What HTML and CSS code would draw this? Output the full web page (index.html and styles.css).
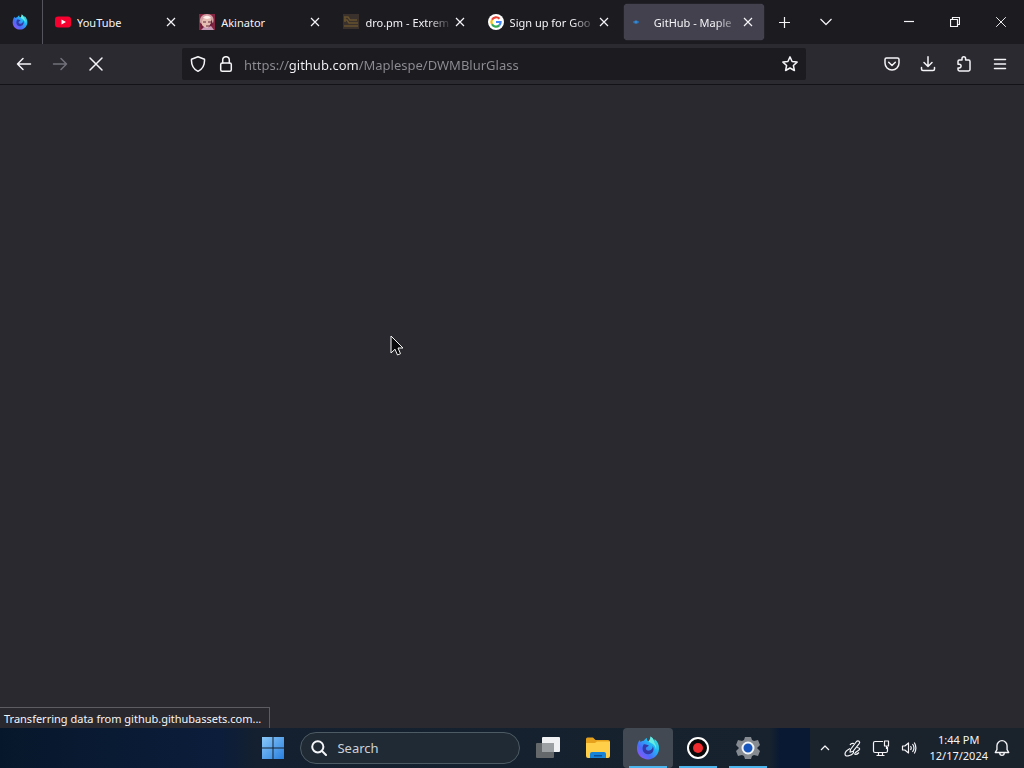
FILE: index.html
```html
<!DOCTYPE html>
<html lang="en">
<head>
<meta charset="utf-8">
<meta name="viewport" content="width=device-width, initial-scale=1">
<title>GitHub - Maplespe/DWMBlurGlass</title>
<link rel="stylesheet" href="styles.css">
</head>
<body>
<svg class="defs" aria-hidden="true">
  <defs>
    <linearGradient id="fox-body" x1="1" y1="0" x2="0" y2="1">
      <stop offset="0" stop-color="#54f0d0"/><stop offset=".35" stop-color="#20b8f5"/><stop offset=".65" stop-color="#4a6cf8"/><stop offset="1" stop-color="#a94df5"/>
    </linearGradient>
    <linearGradient id="win-blue" x1="0" y1="0" x2="1" y2="1">
      <stop offset="0" stop-color="#8ac8f8"/><stop offset="1" stop-color="#287fe0"/>
    </linearGradient>
    <symbol id="firefox" viewBox="0 0 24 24">
      <path fill="url(#fox-body)" d="M2 7c.4-1.200 1-2.300 2-3l.5 2c1-.8 2-1.200 3.300-1.200C8.700 3.300 10 2.300 11 2c-.5 1.400 0 2.500 1.500 3.300C13.800 4 14.500 2.500 14.400.6c2 1 3 2.500 3.700 4.200.5-.4.600-1.100.5-1.800C21.500 5.300 23.300 9 23 13c-.5 6-5.200 10.400-11 10.400S1.200 18.900 1 13c-.1-2.200.3-4.300 1-6z"/>
      <path fill="#3538a8" d="M7.500 8.500c2.500-.8 3.300 1 5.300.8-.6 1.500-2.500 1.600-2.900 2.700-.5 1.700 1.500 3 3.400 2.600 2.200-.5 3.600-2.300 3.400-4.700 2 3.200.5 8-4.200 8.300-4.500.3-7.500-4-5-9.700z"/>
      <path fill="#76f5de" d="M14.400.6c4 2.300 3.200 5.400 5 7.800 1 1.700 1 3.600.6 5.200-.4-2.700-1.500-4.600-3.600-5.800-2-.9-3-1.600-3.900-2.500C14 4 14.500 2.500 14.400.6z" opacity=".8"/>
    </symbol>
    <symbol id="cross" viewBox="0 0 10 10"><path d="M1 1l8 8M9 1L1 9"/></symbol>
  </defs>
</svg>

<div class="browser">
  <header class="tabstrip">
    <button class="pinned" aria-label="Firefox View"><svg width="16" height="16"><use href="#firefox"/></svg></button>
    <div class="tabs" role="tablist">
      <div class="tab" role="tab">
        <svg class="favicon" viewBox="0 0 16 16"><rect y="2.500" width="16" height="11" rx="3" fill="#f5002f"/><path d="M6.500 5.500v5L11 8z" fill="#fff"/></svg>
        <span class="tab-title">YouTube</span>
        <button class="tab-close" aria-label="Close YouTube"><svg class="line" width="10" height="10"><use href="#cross"/></svg></button>
      </div>
      <div class="tab" role="tab">
        <svg class="favicon" viewBox="0 0 16 16"><rect width="16" height="16" fill="#842541"/><path d="M1 9C0 3 4 0 8 0s8 3 6 9l-2 1H3z" fill="#d3a1a5"/><path d="M3 7c1-4 8-5 10-1l-1 5-3 3H6l-3-3z" fill="#e6bdb2"/><path d="M4 4c2-3 6-3 8 0L8 5z" fill="#fff0ec"/><path d="M4 8h3M9 8h3M7 12h3" stroke="#63243a"/><path d="M12 5l2 5-3 4-1-2 2-3zM1 8l2 4 3 2-4 1z" fill="#6d1e3e"/><path d="M2 16l3-3 3 1 4-2 3 4z" fill="#c79cb8"/></svg>
        <span class="tab-title">Akinator</span>
        <button class="tab-close" aria-label="Close Akinator"><svg class="line" width="10" height="10"><use href="#cross"/></svg></button>
      </div>
      <div class="tab" role="tab">
        <svg class="favicon" viewBox="0 0 16 16"><rect width="16" height="15" fill="#3a302c"/><path d="M1 3h4l2 3h7M1 6h3l2 3h9M1 12h14M2 3v5" fill="none" stroke="#66522c" stroke-width="1.500"/></svg>
        <span class="tab-title fading">dro.pm - Extrem</span>
        <button class="tab-close" aria-label="Close dro.pm"><svg class="line" width="10" height="10"><use href="#cross"/></svg></button>
      </div>
      <div class="tab" role="tab">
        <svg class="favicon" viewBox="0 0 16 16"><circle cx="8" cy="8" r="8" fill="#fff"/><g fill="none" stroke-width="2.200"><path d="M11.500 4.800A4.600 4.600 0 0 0 4 5.700" stroke="#e94235"/><path d="M4 5.700a4.600 4.600 0 0 0 0 4.600" stroke="#fbbc04"/><path d="M4 10.300a4.600 4.600 0 0 0 7.200 1.100" stroke="#34a853"/><path d="M11.200 11.400A4.600 4.600 0 0 0 12.600 8H8" stroke="#4285f4"/></g></svg>
        <span class="tab-title fading">Sign up for Goo</span>
        <button class="tab-close" aria-label="Close Sign up"><svg class="line" width="10" height="10"><use href="#cross"/></svg></button>
      </div>
      <div class="tab active" role="tab" aria-selected="true">
        <svg class="favicon" viewBox="0 0 16 16"><ellipse cx="4" cy="8" rx="3" ry="1.500" fill="#286cad"/><circle cx="4" cy="8" r="1.500" fill="#3987ce"/></svg>
        <span class="tab-title fading">GitHub - Maple</span>
        <button class="tab-close" aria-label="Close GitHub"><svg class="line" width="10" height="10"><use href="#cross"/></svg></button>
      </div>
    </div>
    <button class="strip-button" aria-label="New tab"><svg class="line" width="13" height="13" viewBox="0 0 13 13"><path d="M6.500 1v11M1 6.500h11"/></svg></button>
    <button class="strip-button" aria-label="List all tabs"><svg class="line" width="14" height="14" viewBox="0 0 14 14"><path d="M1.500 4L7 9.500 12.500 4"/></svg></button>
    <div class="window-controls">
      <button aria-label="Minimize"><svg class="line" width="10" height="10" viewBox="0 0 10 10"><path d="M0 4.500h10"/></svg></button>
      <button aria-label="Restore"><svg class="line" width="10" height="10" viewBox="0 0 10 10"><path d="M.5 2.500h7v7h-7zM2.500 2.500v-2h7v7h-2"/></svg></button>
      <button aria-label="Close window"><svg class="line thin" width="12" height="12"><use href="#cross"/></svg></button>
    </div>
  </header>

  <nav class="toolbar" aria-label="Navigation">
    <button class="tool" aria-label="Back"><svg class="line bold" width="16" height="16" viewBox="0 0 16 16"><path d="M14.500 8H1.500M7 2.500L1.500 8 7 13.500"/></svg></button>
    <button class="tool" aria-label="Forward" disabled><svg class="line bold" width="16" height="16" viewBox="0 0 16 16"><path d="M1.500 8h13M9 2.500L14.500 8 9 13.500"/></svg></button>
    <button class="tool" aria-label="Stop"><svg class="line bold" width="16" height="16" viewBox="0 0 16 16"><path d="M2 2l12 12M14 2L2 14"/></svg></button>
    <div class="urlbar">
      <button aria-label="Tracking protection"><svg class="line bold" width="16" height="16" viewBox="0 0 16 16"><path d="M8 .8l6.500 2.500c.3 5-1.500 9.500-6.500 12-5-2.500-6.800-7-6.500-12z"/></svg></button>
      <button aria-label="Site information"><svg class="line bold" width="16" height="16" viewBox="0 0 16 16"><rect x="2.700" y="7" width="10.600" height="8.200" rx="1.500"/><path d="M4.700 7V4a3.300 3.300 0 0 1 6.600 0v3"/></svg></button>
      <input class="address" type="text" aria-label="Address" value="https://github.com/Maplespe/DWMBlurGlass" spellcheck="false">
      <button aria-label="Bookmark this page"><svg class="line bold" width="16" height="16" viewBox="0 0 16 16"><path d="M8 .9l2.100 4.600 5 .6-3.700 3.400 1 5L8 12l-4.400 2.500 1-5L.9 6.100l5-.6z"/></svg></button>
    </div>
    <button class="tool" aria-label="Save to Pocket"><svg class="line bold" width="16" height="16" viewBox="0 0 16 16"><path d="M2.500 2h11q1.500 0 1.500 1.500V7a7 7 0 0 1-14 0V3.500Q1 2 2.500 2zM4.700 6.300L8 9.500l3.300-3.200"/></svg></button>
    <button class="tool" aria-label="Downloads"><svg class="line bold" width="16" height="16" viewBox="0 0 16 16"><path d="M8 .8v9.500M4 6.500l4 4 4-4M1.500 11.500v1.500q0 1.500 1.500 1.500h10q1.500 0 1.500-1.500v-1.500"/></svg></button>
    <button class="tool" aria-label="Extensions"><svg class="line bold" width="16" height="16" viewBox="0 0 16 16"><path d="M2 7V5.400Q2 4 3.400 4H6V2.600a1.800 1.800 0 0 1 3.600 0V4h3q1.400 0 1.400 1.400v8.200q0 1.400-1.400 1.400H3.400Q2 15 2 13.600V12h1.200a1.900 1.900 0 0 0 0-3.800H2z"/></svg></button>
    <button class="tool" aria-label="Open application menu"><svg class="line bold" width="16" height="16" viewBox="0 0 16 16"><path d="M2.500 3.500h11M2.500 8h11M2.500 12.500h11"/></svg></button>
  </nav>

  <main class="page">
    <svg class="cursor" width="14" height="22" viewBox="0 0 14 22" aria-hidden="true"><path d="M1 1v17l4-3.800L7.500 20l3-1.300L8 13h5z" fill="#08080b" stroke="#f5f5f5"/></svg>
    <div class="status" role="status">Transferring data from github.githubassets.com...</div>
  </main>
</div>

<footer class="taskbar">
  <div class="launcher">
    <button class="start" aria-label="Start"><svg width="22" height="22" viewBox="0 0 22 22"><path fill="url(#win-blue)" d="M0 0h10.500v10.500H0zM11.500 0H22v10.500H11.500zM0 11.500h10.500V22H0zM11.500 11.500H22V22H11.500z"/></svg></button>
    <label class="search">
      <svg width="16" height="16" viewBox="0 0 16 16" fill="none" stroke="#f4f6f8" stroke-width="2" stroke-linecap="round"><circle cx="6.800" cy="6.800" r="5.600"/><path d="M11 11l4 4"/></svg>
      <input type="search" placeholder="Search" aria-label="Search">
    </label>
    <button class="app" aria-label="Task view"><svg width="24" height="22" viewBox="0 0 24 22"><rect y="6" width="18" height="15" rx="1" fill="#65686b"/><rect x="6" width="18" height="15" rx="1" fill="#f0f1f2"/><path d="M6 6h12v9H6z" fill="#9da0a2"/></svg></button>
    <button class="app" aria-label="File Explorer"><svg width="24" height="22" viewBox="0 0 24 22"><path d="M0 2q0-1.500 1.500-1.500H7L9.500 3H22q2 0 2 2v3H0z" fill="#e6a21d"/><path d="M0 6h9l2-1.500h13V19q0 2-2 2H2q-2 0-2-2z" fill="#ffcf4a"/><path d="M4 21v-4q0-2 2-2h12q2 0 2 2v4z" fill="#1683d8"/><path d="M8 18h8v1.500H8z" fill="#0b4f99"/></svg></button>
    <button class="app running current" aria-label="Firefox"><svg width="24" height="24"><use href="#firefox"/></svg></button>
    <button class="app running" aria-label="Recorder"><svg width="22" height="22" viewBox="0 0 22 22"><circle cx="11" cy="11" r="10" fill="#090909" stroke="#fff" stroke-width="2"/><circle cx="11" cy="11" r="5" fill="#ef2b2d"/></svg></button>
    <button class="app running" aria-label="Settings"><svg width="24" height="24" viewBox="0 0 24 24"><path fill="#858b91" d="M9 1h6l1 3 2 1 4-1 2 5-3 3 3 3-2 5-4-1-2 1-1 3H9l-1-3-2-1-4 1-2-5 3-3-3-3 2-5 4 1 2-1z"/><circle cx="12" cy="12" r="5.500" fill="#1855bb" stroke="#f1f4f8" stroke-width="2"/></svg></button>
  </div>
  <div class="tray">
    <button class="tray-icon" aria-label="Show hidden icons"><svg class="line" width="10" height="10" viewBox="0 0 10 10"><path d="M1 7l4-4 4 4"/></svg></button>
    <button class="tray-icon" aria-label="Pen menu"><svg class="line" width="18" height="18" viewBox="0 0 18 18"><path d="M6.500 10.500l6-8q1.200-1.300 2.500-.3t.2 2.500L9 12.300 6 13.200zM10 4.500Q7 4 6 6M13 8.500q4 .5 2 2.500l-3.500 2.500q-1.500 2 0 2t3.500-2M6 9.500Q1 12 1 15t4.500 1.500 4-4.200"/></svg></button>
    <button class="tray-icon" aria-label="Network"><svg class="line" width="18" height="16" viewBox="0 0 18 16"><path d="M11 1.500H3Q1.500 1.500 1.500 3v8q0 1.500 1.500 1.500h11q1.500 0 1.500-1.500V7M4.500 15.500h8M6.500 12.500v3M10.500 12.500v3M12.500 1h4v5h-4zM14.500 6v3"/></svg></button>
    <button class="tray-icon" aria-label="Volume"><svg class="line" width="16" height="14" viewBox="0 0 16 14"><path d="M1.500 5h2.300L7.500 2v10L3.800 9H1.500zM9.500 5q1.500 2 0 4M11.500 3q3 4 0 8M13.300 1.500q3.200 5.500 0 11"/></svg></button>
    <button class="clock"><time datetime="2024-12-17T13:44">1:44 PM<br>12/17/2024</time></button>
    <button class="notify" aria-label="Notifications"><svg class="line" width="16" height="18" viewBox="0 0 14 16"><path d="M7 1.500a4.500 4.500 0 0 1 4.500 4.500v3.500l1.500 2.500H1l1.500-2.500V6A4.500 4.500 0 0 1 7 1.500zM5 12.500q0 2 2 2t2-2"/></svg></button>
  </div>
</footer>
</body>
</html>
```

FILE: styles.css
```css
* { box-sizing: border-box; }

body {
  margin: 0;
  min-height: 100vh;
  display: flex;
  flex-direction: column;
  background: #2a292f;
  color: #f5f5f8;
  font: 11px/16px "Noto Sans", "Open Sans", sans-serif;
}

button {
  display: flex;
  align-items: center;
  justify-content: center;
  flex-shrink: 0;
  padding: 0;
  border: 0;
  background: none;
  color: inherit;
  font: inherit;
}

svg { display: block; flex-shrink: 0; }
.defs { position: absolute; width: 0; height: 0; }
.line { fill: none; stroke: currentColor; stroke-width: 1.2; stroke-linejoin: round; }
.line.bold { stroke-width: 1.5; stroke-linecap: round; }
.line.thin { stroke-width: .8; }

.browser { flex: 1; display: flex; flex-direction: column; }

.tabstrip { display: flex; height: 44px; background: #1c1b20; }
.pinned { width: 43px; padding-right: 3px; border-right: 1px solid #55545c; }
.tabs { display: flex; flex: 0 1 721px; min-width: 0; gap: 4px; padding: 4px 0 4px 4px; }
.tab {
  display: flex;
  align-items: center;
  flex: 1 1 0;
  min-width: 0;
  padding: 0 8px;
  border-radius: 4px;
}
.tab.active { background: #43414d; box-shadow: 0 0 1px #6b6977; }
.favicon { width: 16px; height: 16px; margin-right: 6px; }
.tab-title {
  flex: 1;
  min-width: 0;
  padding-top: 1px;
  overflow: hidden;
  white-space: nowrap;
}
.fading { mask-image: linear-gradient(to left, transparent, #000 24px); }
.tab-close { width: 16px; height: 24px; }
.strip-button { width: 41px; }
.window-controls { display: flex; margin-left: auto; }
.window-controls button { width: 46px; }

.toolbar {
  display: flex;
  align-items: center;
  height: 41px;
  padding: 0 6px;
  background: #2b2a31;
  border-bottom: 1px solid #131217;
}
.tool { width: 36px; height: 32px; }
.tool:disabled { color: #72717a; }
.urlbar {
  display: flex;
  align-items: center;
  flex: 1;
  min-width: 0;
  height: 32px;
  margin: 0 68px;
  padding: 0 2px;
  border-radius: 2px;
  background: #1c1b20;
}
.urlbar button { width: 28px; height: 32px; }
.address {
  flex: 1;
  min-width: 0;
  padding: 2px 4px 0;
  border: 0;
  outline: 0;
  background: linear-gradient(to right, #8e8d94 48px, #f5f5f8 48px, #f5f5f8 118px, #8e8d94 118px);
  background-clip: text;
  color: transparent;
  font: 13px/20px "Noto Sans", "Open Sans", sans-serif;
}

.page { position: relative; flex: 1; display: flex; align-items: flex-end; }
.cursor { position: absolute; left: 390px; top: 250px; }
.status {
  padding: 3px 8px 1px 4px;
  border: 1px solid #5d5c62;
  border-width: 1px 1px 0 0;
  background: #29282e;
}

.taskbar {
  display: flex;
  height: 40px;
  background: linear-gradient(to right, #07172b, #0b1d3b 220px, #14202f 256px, #17222e 770px, #0a1933 780px, #0a1933 100%);
}
.launcher { display: flex; flex: 1; align-items: center; justify-content: flex-end; padding-right: 37px; }
.start { width: 50px; height: 40px; }
.search {
  display: flex;
  align-items: center;
  gap: 10px;
  width: 220px;
  height: 32px;
  margin: 0 3px 0 2px;
  padding: 0 10px;
  border: 1px solid #4c5b64;
  border-radius: 16px;
  background: #202a34;
}
.search input {
  flex: 1;
  min-width: 0;
  padding: 0;
  border: 0;
  outline: 0;
  background: none;
  color: #d1d7dd;
  font: 13px/16px "Noto Sans", "Open Sans", sans-serif;
}
.search input::placeholder { color: #cbd1d8; opacity: 1; }
.app { position: relative; width: 50px; height: 40px; border-radius: 4px; }
.running::after {
  content: "";
  position: absolute;
  left: 6px;
  right: 6px;
  bottom: 0;
  height: 2px;
  background: #4cb5ed;
}
.current { background: #424952; }
.tray { display: flex; align-items: center; padding: 0 12px 0 1px; background: #1a222c; }
.tray-icon { width: 28px; height: 40px; }
.clock { margin: 0 4px 0 6px; text-align: center; }
.notify { width: 20px; height: 40px; }
```
